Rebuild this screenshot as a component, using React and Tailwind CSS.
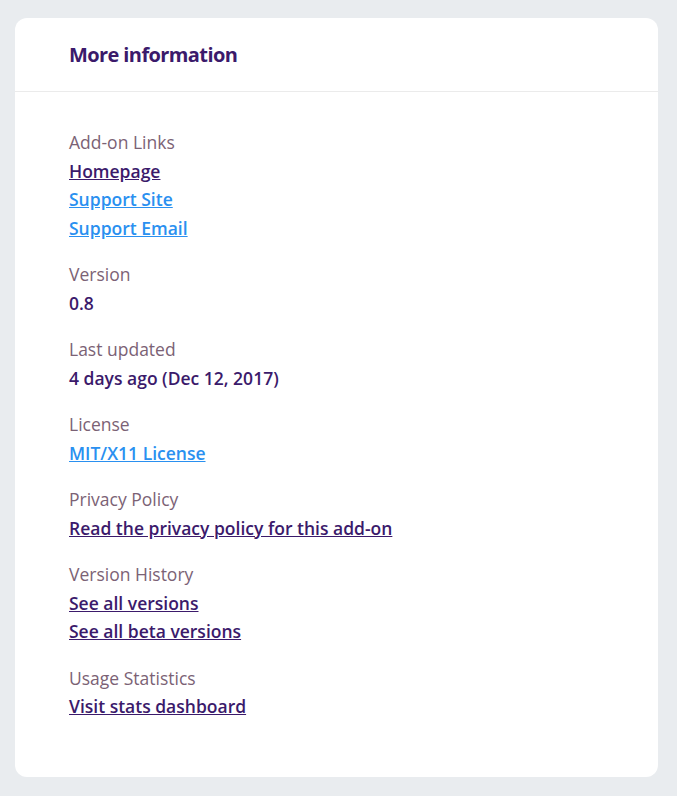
import React from "react";

const sections = [
  {
    label: "Add-on Links",
    links: [
      { text: "Homepage", blue: false },
      { text: "Support Site", blue: true },
      { text: "Support Email", blue: true },
    ],
  },
  { label: "Version", value: "0.8" },
  { label: "Last updated", value: "4 days ago (Dec 12, 2017)" },
  { label: "License", links: [{ text: "MIT/X11 License", blue: true }] },
  {
    label: "Privacy Policy",
    links: [{ text: "Read the privacy policy for this add-on", blue: false }],
  },
  {
    label: "Version History",
    links: [
      { text: "See all versions", blue: false },
      { text: "See all beta versions", blue: false },
    ],
  },
  {
    label: "Usage Statistics",
    links: [{ text: "Visit stats dashboard", blue: false }],
  },
];

export default function App() {
  return (
    <div
      className="min-h-screen bg-[#e9ecef] pt-[18px] pb-[21px] pl-[15px] pr-[19px]"
      style={{ fontFamily: "'Open Sans', Lato, sans-serif" }}
    >
      <div className="bg-white rounded-xl">
        {/* Header */}
        <div className="h-[74px] flex items-center px-[54px] border-b border-[#ebebeb]">
          <h2 className="text-[20px] font-bold text-[#3b1a6b] tracking-[-0.6px]">
            More information
          </h2>
        </div>

        <dl className="px-[54px] pt-[36px] pb-[38px] text-[17.5px] leading-[28.5px]">
          {sections.map((s) => (
            <div key={s.label} className="mb-[18px]">
              <dt className="text-[#7b6275]">{s.label}</dt>
              {s.value && (
                <dd className="font-semibold text-[#3b1a6b]">{s.value}</dd>
              )}
              {s.links &&
                s.links.map((l) => (
                  <dd key={l.text}>
                    <a
                      href="#"
                      className={
                        l.blue
                          ? "font-semibold underline text-[#2a90f0]"
                          : "font-semibold underline text-[#3b1a6b]"
                      }
                    >
                      {l.text}
                    </a>
                  </dd>
                ))}
            </div>
          ))}
        </dl>
      </div>
    </div>
  );
}
